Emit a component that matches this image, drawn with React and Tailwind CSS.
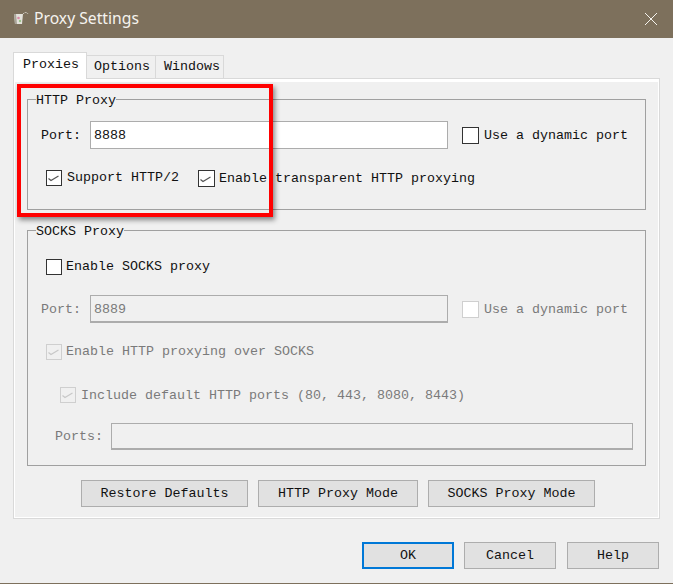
import React from "react";

const MONO = "font-['Liberation_Mono',monospace] text-[13.33px] leading-[16px] whitespace-pre";

const Check = ({ checked, disabled, size = "h-[16px] w-[16px]" }) => (
  <span
    className={`flex shrink-0 items-center justify-center border ${size} ${
      disabled ? (checked ? "border-[#cfcfcf] bg-[#f0f0f0]" : "border-[#cfcfcf] bg-white") : "border-[#333333] bg-white"
    }`}
  >
    {checked && (
      <svg width="14" height="14" viewBox="0 0 14 14" fill="none">
        <path d="M1.5 7.5 L4 9.5 L11.5 5" stroke={disabled ? "#c8c8c8" : "#555555"} strokeWidth="1.2" />
      </svg>
    )}
  </span>
);

const CheckLabel = ({ checked, disabled, children, size, gap = "gap-[5px]", textClass = "", className = "" }) => (
  <div className={`flex items-center ${gap} ${className}`}>
    <Check checked={checked} disabled={disabled} size={size} />
    <span className={`${MONO} ${textClass} ${disabled ? "text-[#7a7a7a]" : "text-[#111111]"}`}>{children}</span>
  </div>
);

const Btn = ({ children, width, primary, className = "" }) => (
  <button
    className={`flex h-[27px] items-center justify-center bg-[#e1e1e1] text-[#111111] ${MONO} ${width} ${className} ${
      primary ? "border-2 border-[#0078d7]" : "border border-[#adadad]"
    }`}
  >
    {children}
  </button>
);

const Group = ({ title, className, children }) => (
  <fieldset className={`border border-[#a0a0a0] ${className}`}>
    <legend className={`ml-[8px] pt-[4px] ${MONO} text-[#111111]`}>{title}</legend>
    {children}
  </fieldset>
);

const PortRow = ({ value, disabled }) => (
  <div className="flex items-center">
    <span className={`ml-[13px] w-[49px] pt-[2px] ${MONO} ${disabled ? "text-[#7a7a7a]" : "text-[#111111]"}`}>Port:</span>
    <div
      className={`flex h-[28px] w-[358px] items-center px-[3px] pt-[2px] ${MONO} ${
        disabled
          ? "border border-b-2 border-[#acacac] bg-[#f0f0f0] text-[#7a7a7a]"
          : "border border-[#acacac] bg-white text-[#111111]"
      }`}
    >
      {value}
    </div>
    <CheckLabel disabled={disabled} size="h-[17px] w-[17px]" className="ml-[14px] pt-[1px]">
      Use a dynamic port
    </CheckLabel>
  </div>
);

export default function App() {
  return (
    <div className="relative flex h-[584px] w-[673px] flex-col overflow-hidden border-b border-[#7d705c] bg-[#f0f0f0]">
      {/* title bar */}
      <div className="flex h-[38px] shrink-0 items-center bg-[#7d705c] pl-[13px] pr-[15px]">
        <svg width="16" height="16" viewBox="0 0 16 16" className="shrink-0">
          <path d="M1 3 L10 3 L9 13 L2 13 Z" fill="#e4e2dc" />
          <path d="M1 3 L3 3 L4 13 L2 13 Z" fill="#a9a498" />
          <circle cx="5.5" cy="7" r="1.3" fill="#d98aa6" />
          <circle cx="7" cy="10" r="1.2" fill="#9cc48c" />
          <path d="M10 3 Q13 0 15 3" stroke="#e4e2dc" strokeWidth="1" strokeDasharray="1.5 1" fill="none" />
        </svg>
        <span className="ml-[5px] font-['Noto_Sans',sans-serif] text-[15.7px] text-[#f5f3ee]">Proxy Settings</span>
        <svg width="14" height="14" viewBox="0 0 14 14" className="ml-auto">
          <path d="M1 1 L13 13 M13 1 L1 13" stroke="#f5f3ee" strokeWidth="1" />
        </svg>
      </div>

      <div className="flex flex-col px-[13px] pt-[14px]">
        {/* tabs */}
        <div className="relative z-10 -mb-px flex h-[27px] items-end">
          <div className={`flex h-[27px] w-[74px] items-center border border-b-0 border-[#d9d9d9] bg-white pb-[3px] pl-[9px] text-[#111111] ${MONO}`}>
            Proxies
          </div>
          <div className={`flex h-[24px] w-[69px] items-center border border-l-0 border-[#d9d9d9] bg-[#f0f0f0] pl-[7px] text-[#111111] ${MONO}`}>
            Options
          </div>
          <div className={`flex h-[24px] w-[68px] items-center border border-l-0 border-[#d9d9d9] bg-[#f0f0f0] pl-[8px] text-[#111111] ${MONO}`}>
            Windows
          </div>
        </div>

        {/* panel */}
        <div className="flex h-[441px] w-[647px] flex-col border border-[#d9d9d9] bg-[#f0f0f0] px-[13px] pt-[10px] shadow-[inset_0_3px_0_#ffffff,inset_0_0_0_1px_#ffffff]">
          <Group title="HTTP Proxy" className="h-[121px] w-[619px]">
            <div className="pt-[12px]">
              <PortRow value="8888" />
              <div className="ml-[18px] mt-[21px] flex items-start">
                <CheckLabel checked>Support HTTP/2</CheckLabel>
                <CheckLabel checked size="h-[17px] w-[17px]" gap="gap-[4px]" className="ml-[19px]">
                  Enable transparent HTTP proxying
                </CheckLabel>
              </div>
            </div>
          </Group>

          <Group title="SOCKS Proxy" className="mt-[10px] h-[246px] w-[619px]">
            <div className="pt-[19px]">
              <CheckLabel gap="gap-[4px]" className="ml-[18px]">Enable SOCKS proxy</CheckLabel>
              <div className="mt-[20px]">
                <PortRow value="8889" disabled />
              </div>
              <CheckLabel checked disabled gap="gap-[4px]" className="ml-[18px] mt-[21px]">
                Enable HTTP proxying over SOCKS
              </CheckLabel>
              <CheckLabel checked disabled textClass="pt-[2px]" className="ml-[32px] mt-[26px]">
                Include default HTTP ports (80, 443, 8080, 8443)
              </CheckLabel>
              <div className="mt-[19px] flex items-center">
                <span className={`ml-[27px] w-[56px] text-[#7a7a7a] ${MONO}`}>Ports:</span>
                <div className="h-[27px] w-[522px] border border-b-2 border-[#acacac] bg-[#f0f0f0]" />
              </div>
            </div>
          </Group>

          <div className="ml-[54px] mt-[14px] flex gap-[10px]">
            <Btn width="w-[167px]">Restore Defaults</Btn>
            <Btn width="w-[160px]">HTTP Proxy Mode</Btn>
            <Btn width="w-[167px]">SOCKS Proxy Mode</Btn>
          </div>
        </div>

        {/* dialog buttons */}
        <div className="mt-[23px] flex justify-end gap-[10px] pr-[1px]">
          <Btn width="w-[92px]" primary>OK</Btn>
          <Btn width="w-[92px]">Cancel</Btn>
          <Btn width="w-[92px]" className="ml-[1px]">Help</Btn>
        </div>
      </div>

      {/* red annotation box */}
      <div className="absolute left-[17px] top-[84px] h-[133px] w-[256px] border-[4px] border-[#ff0000] shadow-[2px_3px_5px_rgba(0,0,0,0.45)]" />
    </div>
  );
}
